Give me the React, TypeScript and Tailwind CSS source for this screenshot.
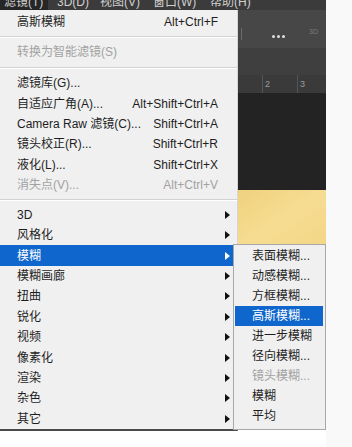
import React from "react";

type ItemProps = {
  label: string;
  shortcut?: string;
  disabled?: boolean;
  arrow?: boolean;
  active?: boolean;
};

function Arrow({ active }: { active?: boolean }) {
  return (
    <span
      className={`ml-auto w-0 h-0 border-y-[4px] border-y-transparent border-l-[5px] ${
        active ? "border-l-white" : "border-l-[#111111]"
      }`}
    />
  );
}

function Item({ label, shortcut, disabled, arrow, active }: ItemProps) {
  return (
    <div
      className={`h-[20.4px] flex items-center pl-[17px] ${arrow ? "pr-[7px]" : "pr-[19px]"} ${
        active
          ? "bg-[#0f66cc] text-white"
          : disabled
          ? "text-[#a2a2a2]"
          : "text-[#1e1e1e]"
      }`}
    >
      <span className="whitespace-nowrap">{label}</span>
      {shortcut && <span className="ml-auto whitespace-nowrap">{shortcut}</span>}
      {arrow && <Arrow active={active} />}
    </div>
  );
}

function Sep({ h }: { h: string }) {
  return (
    <div className={`${h} flex flex-col justify-center`}>
      <div className="h-px bg-[#d2d2d2]" />
      <div className="h-px bg-white" />
    </div>
  );
}

function SubItem({ label, disabled, active }: { label: string; disabled?: boolean; active?: boolean }) {
  return (
    <div
      className={`h-[20px] ml-[1px] mr-[2px] pl-[17px] flex items-center whitespace-nowrap ${
        active ? "bg-[#0f66cc] text-white" : disabled ? "text-[#a2a2a2]" : "text-[#1e1e1e]"
      }`}
    >
      {label}
    </div>
  );
}

export default function App() {
  return (
    <div className="w-[352px] h-[447px] bg-white relative overflow-hidden font-['Liberation_Sans','Noto_Sans_CJK_SC',sans-serif] text-[12px] leading-[14px]">
      <div className="flex">
        <div className="w-[326px] flex flex-col">
          {/* menubar */}
          <div className="h-[10px] bg-[#3b3b3b] overflow-hidden flex text-[#cfcfcf] text-[12px] leading-[12px]">
            <div className="w-[48px] pl-[4px] -mt-[4px] bg-[#262626] h-[14px]">滤镜(T)</div>
            <div className="w-[52px] pl-[9px] -mt-[4px]">3D(D)</div>
            <div className="w-[53px] -mt-[4px]">视图(V)</div>
            <div className="w-[57px] -mt-[4px]">窗口(W)</div>
            <div className="-mt-[4px]">帮助(H)</div>
          </div>
          <div className="flex">
            {/* main menu */}
            <div className="w-[238px] bg-[#f0f0f0] border-r border-[#d6d6d6] pt-[2px] border-b-2 border-b-[#4a4a4a]">
              <Item label="高斯模糊" shortcut="Alt+Ctrl+F" />
              <Sep h="h-[9.6px]" />
              <Item label="转换为智能滤镜(S)" disabled />
              <Sep h="h-[10.6px]" />
              <Item label="滤镜库(G)..." />
              <Item label="自适应广角(A)..." shortcut="Alt+Shift+Ctrl+A" />
              <Item label="Camera Raw 滤镜(C)..." shortcut="Shift+Ctrl+A" />
              <Item label="镜头校正(R)..." shortcut="Shift+Ctrl+R" />
              <Item label="液化(L)..." shortcut="Shift+Ctrl+X" />
              <Item label="消失点(V)..." shortcut="Alt+Ctrl+V" disabled />
              <Sep h="h-[9.4px]" />
              <Item label="3D" arrow />
              <Item label="风格化" arrow />
              <Item label="模糊" arrow active />
              <Item label="模糊画廊" arrow />
              <Item label="扭曲" arrow />
              <Item label="锐化" arrow />
              <Item label="视频" arrow />
              <Item label="像素化" arrow />
              <Item label="渲染" arrow />
              <Item label="杂色" arrow />
              <Item label="其它" arrow />
            </div>
            {/* right photoshop panel */}
            <div className="w-[88px] flex flex-col">
              <div className="h-[38px] bg-[#474747] flex items-end pb-[10px] relative">
                <div className="w-px h-[12px] bg-[#6a6a6a] ml-[3px] mb-[-2px]" />
                <div className="ml-[30px] flex gap-[2px]">
                  <span className="w-[3px] h-[3px] bg-[#e0e0e0] rounded-full" />
                  <span className="w-[3px] h-[3px] bg-[#e0e0e0] rounded-full" />
                  <span className="w-[3px] h-[3px] bg-[#e0e0e0] rounded-full" />
                </div>
                <span className="ml-auto mr-[8px] mb-[3px] text-[7px] leading-[7px] text-[#7a7a7a]">3D</span>
              </div>
              <div className="h-[27px] bg-[#3f3f3f]" />
              <div className="h-[18px] bg-[#3a3a3a] flex text-[9px] leading-[18px] text-[#9a9a9a]">
                <div className="w-[24px]" />
                <div className="w-[35px] border-l border-[#555555] pl-[2px]">2</div>
                <div className="border-l border-[#555555] pl-[2px]">3</div>
              </div>
              <div className="h-[97px] bg-[#232323]" />
              <div className="h-[60px] bg-gradient-to-br from-[#f0d27e] via-[#f6dc92] to-[#f3d584]" />
            </div>
          </div>
        </div>
        <div className="flex-1 bg-[#f9f9f9] h-[447px]" />
      </div>

      {/* submenu */}
      <div className="absolute left-[233px] top-[244px] w-[93px] bg-[#f0f0f0] border border-[#a8a8a8] pt-[1px] pb-[3px]">
        <SubItem label="表面模糊..." />
        <SubItem label="动感模糊..." />
        <SubItem label="方框模糊..." />
        <SubItem label="高斯模糊..." active />
        <SubItem label="进一步模糊" />
        <SubItem label="径向模糊..." />
        <SubItem label="镜头模糊..." disabled />
        <SubItem label="模糊" />
        <SubItem label="平均" />
      </div>
    </div>
  );
}
